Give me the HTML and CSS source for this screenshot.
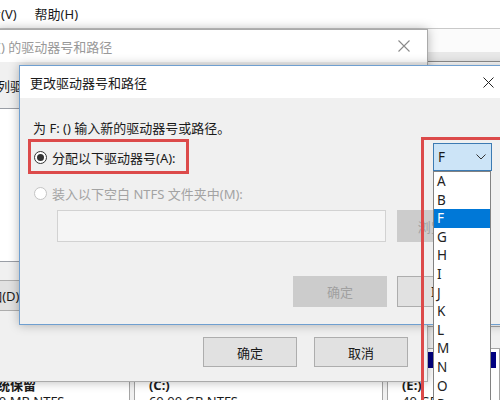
FILE: index.html
```html
<!DOCTYPE html>
<html lang="zh-CN">

<head>
  <meta charset="UTF-8">
  <meta name="viewport" content="width=device-width, initial-scale=1.0">
  <title>更改驱动器号和路径</title>
  <link rel="stylesheet" href="styles.css">
</head>

<body>
  <!-- disk management window behind the dialogs -->
  <div class="app">
    <div class="menubar">
      <span class="menu-item">查看(V)</span>
      <span class="menu-item">帮助(H)</span>
    </div>
    <div class="toolbar"></div>
    <div class="colhead"></div>
    <div class="listpane"></div>
    <div class="diskpane">
      <div class="parts">
        <div class="part p1">
          <div class="part-bar"></div>
          <div class="part-label"><b>系统保留</b><br>500 MB NTFS</div>
        </div>
        <div class="part p2">
          <div class="part-bar"></div>
          <div class="part-label"><b>(C:)</b><br>60.00 GB NTFS</div>
        </div>
        <div class="part p3">
          <div class="part-bar"></div>
          <div class="part-label"><b>(E:)</b><br>40 GB</div>
        </div>
      </div>
    </div>
  </div>

  <!-- first dialog, inactive -->
  <div class="dialog dialog-back">
    <div class="titlebar">
      <span class="title">() 的驱动器号和路径</span>
      <span class="close">
        <svg width="12" height="12" viewBox="0 0 12 12"><path d="M0.5 0.5L11.5 11.5M11.5 0.5L0.5 11.5" stroke="#8a8a8a" stroke-width="1.1" fill="none"/></svg>
      </span>
    </div>
    <div class="back-body">
      <p class="back-label">列驱动器号和路径(P):</p>
      <div class="listbox"></div>
      <div class="action-row">
        <button class="btn">添加(D)...</button>
      </div>
      <div class="button-row back-buttons">
        <button class="btn">确定</button>
        <button class="btn">取消</button>
      </div>
    </div>
  </div>

  <!-- active dialog -->
  <div class="dialog dialog-front">
    <div class="titlebar">
      <span class="title">更改驱动器号和路径</span>
      <span class="close">
        <svg width="11" height="11" viewBox="0 0 11 11"><path d="M0.5 0.5L10.5 10.5M10.5 0.5L0.5 10.5" stroke="#222" stroke-width="1" fill="none"/></svg>
      </span>
    </div>
    <div class="front-body">
      <p class="intro">为 F: () 输入新的驱动器号或路径。</p>
      <div class="row row-assign">
        <label class="radio-label"><span class="radio checked"></span>分配以下驱动器号(A):</label>
        <div class="combo">
          <span class="combo-value">F</span>
          <svg width="10" height="6" viewBox="0 0 10 6"><path d="M0.5 0.5L5 5L9.5 0.5" stroke="#333" stroke-width="1" fill="none"/></svg>
          <ul class="dropdown">
            <li>A</li>
            <li>B</li>
            <li class="selected">F</li>
            <li>G</li>
            <li>H</li>
            <li>I</li>
            <li>J</li>
            <li>K</li>
            <li>L</li>
            <li>M</li>
            <li>N</li>
            <li>O</li>
            <li>P</li>
            <li>Q</li>
          </ul>
        </div>
      </div>
      <div class="row row-mount">
        <label class="radio-label disabled"><span class="radio"></span>装入以下空白 NTFS 文件夹中(M):</label>
      </div>
      <div class="row row-path">
        <div class="path-input"></div>
        <button class="btn btn-off">浏览(B)...</button>
      </div>
      <div class="button-row front-buttons">
        <button class="btn btn-off">确定</button>
        <button class="btn">取消</button>
      </div>
    </div>
  </div>

  <!-- red highlight marks drawn over the screenshot -->
  <div class="mark mark-radio"></div>
  <div class="mark mark-combo"></div>
</body>
</html>
```

FILE: styles.css
```css
* {
  margin: 0;
  padding: 0;
  box-sizing: border-box;
}
body {
  width: 500px;
  height: 400px;
  overflow: hidden;
  position: relative;
  background: #fff;
  font-family: "Noto Sans", "Noto Sans CJK SC", sans-serif;
  font-size: 13px;
  color: #1a1a1a;
}
button {
  font: inherit;
  color: inherit;
}

/* background window */
.menubar {
  height: 29px;
  border-bottom: 1px solid #c9c9c9;
  display: flex;
  margin-left: -34px;
}
.menu-item {
  padding: 0 9px;
  line-height: 29px;
}
.toolbar {
  height: 23px;
  background: #fbfbfb;
}
.colhead {
  height: 10px;
  background: #e8e8e8;
  border-bottom: 1px solid #8d8d8d;
}
.listpane {
  height: 264px;
  background: #fff;
}
.diskpane {
  height: 74px;
  background: #f0f0f0;
  border-top: 1px solid #a8a8a8;
  padding-top: 21px;
}
.parts {
  display: flex;
  gap: 4px;
  margin-left: -31px;
}
.part {
  border: 1px solid #a5a5a5;
  background: #fff;
  padding: 3px;
  height: 70px;
}
.p1 { width: 171px; }
.p2 { width: 265px; }
.p3 { width: 120px; }
.part-bar {
  height: 16px;
  background: #00007f;
}
.part-label {
  padding: 9px 11px 0;
  line-height: 16px;
  white-space: nowrap;
}

/* dialogs */
.dialog {
  position: absolute;
  background: #f0f0f0;
  box-shadow: 0 0 10px rgba(0, 0, 0, .28);
}
.titlebar {
  height: 32px;
  background: #fff;
  display: flex;
  justify-content: space-between;
  align-items: center;
}
.close {
  width: 46px;
  height: 32px;
  display: flex;
  align-items: center;
  justify-content: center;
}
.dialog-back {
  left: -4px;
  top: 29px;
  width: 432px;
  height: 353px;
  border: 1px solid #aaa;
  z-index: 1;
}
.dialog-back .title {
  color: #999;
}
.back-body {
  padding-top: 15px;
}
.back-label {
  line-height: 18px;
  white-space: nowrap;
}
.listbox {
  margin: 13px 0 0 -10px;
  height: 154px;
  background: #fff;
  border: 1px solid #9a9ea6;
}
.action-row {
  margin: 18px 0 0 -41px;
}
.action-row .btn {
  height: 31px;
}
.btn {
  width: 94px;
  height: 31px;
  background: #e1e1e1;
  border: 1px solid #adadad;
}
.button-row {
  display: flex;
  justify-content: flex-end;
}
.back-buttons {
  margin-top: 26px;
  padding-right: 19px;
  gap: 17px;
}
.back-buttons .btn {
  height: 30px;
}

.dialog-front {
  left: 19px;
  top: 65px;
  width: 493px;
  height: 260px;
  border: 1px solid #6f9fd0;
  z-index: 2;
}
.dialog-front .title {
  padding-left: 10px;
  white-space: nowrap;
}
.front-body {
  padding: 21px 20px 0 14px;
}
.intro {
  line-height: 18px;
  margin-left: -1px;
  white-space: nowrap;
}
.row {
  display: flex;
  align-items: center;
}
.row-assign {
  margin-top: 6px;
  height: 28px;
}
.row-mount {
  margin-top: 13px;
  height: 18px;
}
.row-path {
  margin: 8px 0 0 23px;
  height: 32px;
  gap: 11px;
}
.radio-label {
  display: flex;
  align-items: center;
  white-space: nowrap;
}
.radio-label.disabled {
  color: #a3a3a3;
}
.radio {
  width: 13px;
  height: 13px;
  border-radius: 50%;
  border: 1px solid #c4c4c4;
  background: #fff;
  margin-right: 5px;
  display: flex;
  align-items: center;
  justify-content: center;
}
.radio.checked {
  border-color: #333;
}
.radio.checked::after {
  content: "";
  width: 7px;
  height: 7px;
  border-radius: 50%;
  background: #333;
}
.combo {
  position: relative;
  margin-left: auto;
  margin-right: -1px;
  width: 59px;
  height: 28px;
  background: #cce4f7;
  border: 1px solid #3d7bb3;
  display: flex;
  align-items: center;
  justify-content: space-between;
  padding: 0 5px 0 4px;
  font-size: 13.5px;
}
.dropdown {
  list-style: none;
  position: absolute;
  top: 27px;
  left: -1px;
  width: 58px;
  background: #fff;
  border: 1px solid #828282;
  z-index: 3;
}
.dropdown li {
  height: 18.6px;
  line-height: 18.6px;
  padding-left: 3px;
  font-size: 13.5px;
  color: #222;
}
.dropdown li.selected {
  background: #0078d7;
  color: #fff;
}
.path-input {
  flex: 1;
  height: 32px;
  background: #f5f5f5;
  border: 1px solid #d2d2d2;
}
.row-path .btn {
  height: 32px;
}
.btn-off {
  background: #ccc;
  border-color: #ccc;
  color: #a0a0a0;
}
.front-buttons {
  margin-top: 34px;
  gap: 10px;
}

/* annotation boxes */
.mark {
  position: absolute;
  border: 3px solid #dc4a4a;
  z-index: 4;
}
.mark-radio {
  left: 28px;
  top: 139px;
  width: 161px;
  height: 35px;
}
.mark-combo {
  left: 421px;
  top: 137px;
  width: 120px;
  height: 300px;
}
```
